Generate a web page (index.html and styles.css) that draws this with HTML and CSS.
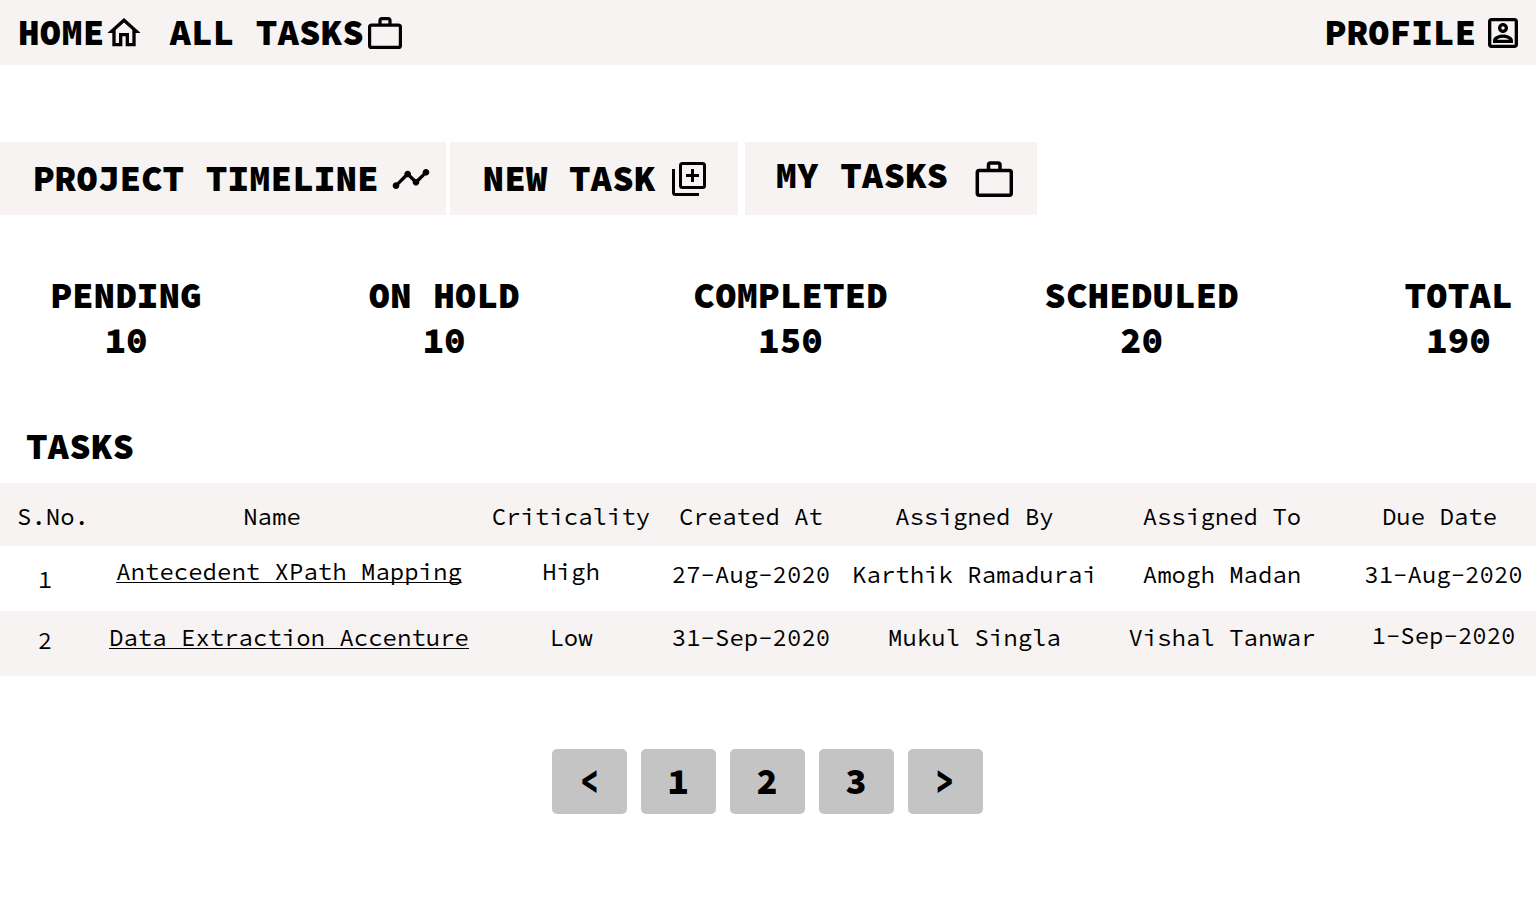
FILE: index.html
```html
<!DOCTYPE html>
<html lang="en">
<head>
<meta charset="utf-8">
<title>Tasks</title>
<link rel="stylesheet" href="styles.css">
</head>
<body>
<header class="topbar">
  <nav class="topnav">
    <a class="toplink" href="#">HOME<svg class="icon icon-home" viewBox="0 0 24 24"><path d="M12 5.69l5 4.5V18h-2v-6H9v6H7v-7.81l5-4.5M12 3L2 12h3v8h6v-6h2v6h6v-8h3L12 3z"/></svg></a>
    <a class="toplink" href="#">ALL TASKS<svg class="icon icon-case" viewBox="0 0 34 33"><rect x="1.600" y="9.100" width="30.800" height="22.300" rx="2"/><path d="M12 9V4.600Q12 2.600 14 2.600H20Q22 2.600 22 4.600V9"/></svg></a>
  </nav>
  <a class="toplink profile" href="#">PROFILE<svg class="icon icon-profile" viewBox="3 3 18 18"><path d="M19 5v14H5V5h14m0-2H5c-1.110 0-2 .9-2 2v14c0 1.100.89 2 2 2h14c1.100 0 2-.9 2-2V5c0-1.100-.9-2-2-2zm-7 9c-1.650 0-3-1.350-3-3s1.350-3 3-3 3 1.350 3 3-1.350 3-3 3zm0-4c-.55 0-1 .45-1 1s.45 1 1 1 1-.45 1-1-.45-1-1-1zm6 10H6v-1.530c0-2.500 3.970-3.580 6-3.580s6 1.080 6 3.580V18zm-9.690-2h7.380c-.69-.56-2.380-1.120-3.690-1.120s-3.010.56-3.690 1.120z"/></svg></a>
</header>
<main>
  <nav class="tabs">
    <a class="tab tab-timeline" href="#">PROJECT TIMELINE<svg class="icon icon-timeline" viewBox="1 6 22 12"><path d="M23 8c0 1.100-.9 2-2 2-.18 0-.35-.02-.51-.07l-3.560 3.550c.05.16.07.34.07.52 0 1.100-.9 2-2 2s-2-.9-2-2c0-.18.02-.36.07-.52l-2.550-2.550c-.16.05-.34.07-.52.07s-.36-.02-.52-.07l-4.550 4.560c.05.16.07.33.07.51 0 1.100-.9 2-2 2s-2-.9-2-2 .9-2 2-2c.18 0 .35.02.51.07l4.560-4.550C8.020 9.360 8 9.180 8 9c0-1.100.9-2 2-2s2 .9 2 2c0 .18-.02.36-.07.52l2.550 2.550c.16-.05.34-.07.52-.07s.36.02.52.07l3.550-3.560C19.020 8.350 19 8.180 19 8c0-1.100.9-2 2-2s2 .9 2 2z"/></svg></a>
    <a class="tab tab-new" href="#">NEW TASK<svg class="icon icon-add" viewBox="0 0 34 34"><rect x="8.500" y="1.500" width="24" height="24" rx="2"/><path d="M1.500 7V30.500Q1.500 32.500 3.500 32.500H27M20.500 7V20M14 13.500H27"/></svg></a>
    <a class="tab tab-mine" href="#"><span class="tab-raised">MY TASKS</span><svg class="icon icon-case-large" viewBox="0 0 38 36"><rect x="2.300" y="9.600" width="34" height="24.600" rx="2"/><path d="M13.500 9V4Q13.500 2 15.500 2H23Q25 2 25 4V9"/></svg></a>
  </nav>
  <dl class="stats">
    <div class="stat"><dt>PENDING</dt><dd>10</dd></div>
    <div class="stat"><dt>ON HOLD</dt><dd>10</dd></div>
    <div class="stat"><dt>COMPLETED</dt><dd>150</dd></div>
    <div class="stat"><dt>SCHEDULED</dt><dd>20</dd></div>
    <div class="stat"><dt>TOTAL</dt><dd>190</dd></div>
  </dl>
  <h1 class="heading">TASKS</h1>
  <table class="tasks">
    <colgroup><col class="c-no"><col class="c-name"><col class="c-crit"><col class="c-created"><col class="c-by"><col class="c-to"><col class="c-due"></colgroup>
    <thead>
      <tr><th class="h-no">S.No.</th><th class="h-name">Name</th><th>Criticality</th><th>Created At</th><th>Assigned By</th><th>Assigned To</th><th>Due Date</th></tr>
    </thead>
    <tbody>
      <tr><td class="low">1</td><td class="high"><a href="#">Antecedent XPath Mapping</a></td><td class="high">High</td><td>27-Aug-2020</td><td>Karthik Ramadurai</td><td>Amogh Madan</td><td class="due">31-Aug-2020</td></tr>
      <tr class="alt"><td class="low">2</td><td><a href="#">Data Extraction Accenture</a></td><td>Low</td><td>31-Sep-2020</td><td>Mukul Singla</td><td>Vishal Tanwar</td><td class="due high">1-Sep-2020</td></tr>
    </tbody>
  </table>
  <nav class="pages" aria-label="Pages">
    <button type="button">&lt;</button>
    <button type="button">1</button>
    <button type="button">2</button>
    <button type="button">3</button>
    <button type="button">&gt;</button>
  </nav>
</main>
</body>
</html>
```

FILE: styles.css
```css
* { box-sizing: border-box; }
body {
  margin: 0;
  background: #fff;
  color: #000;
  font-family: "Source Code Pro", "DejaVu Sans Mono", monospace;
  font-size: 36px;
  font-weight: 900;
  line-height: 45px;
}
a { color: inherit; }
.icon { flex: none; fill: currentColor; }
.icon-case, .icon-case-large, .icon-add { fill: none; stroke: currentColor; stroke-width: 3; }
.icon-case { stroke-width: 3.2; }
.icon-case-large { stroke-width: 3.5; }
.topbar {
  display: flex;
  align-items: center;
  justify-content: space-between;
  min-height: 65px;
  padding: 0 18px;
  background: #f7f3f2;
}
.topnav { display: flex; gap: 25px; }
.toplink, .tab { display: flex; align-items: center; text-decoration: none; white-space: nowrap; }
.icon-home { width: 40px; height: 40px; }
.icon-case { width: 34px; height: 33px; margin-left: 4px; }
.icon-profile { width: 30px; height: 30px; }
.profile { gap: 12px; }
.tabs { display: flex; margin-top: 77px; }
.tab { min-height: 73px; padding: 0 16px 0 33px; background: #f7f3f2; }
.tab-timeline { gap: 13px; margin-right: 4px; }
.tab-new { gap: 17px; padding: 0 32px 0 33px; margin-right: 7px; }
.tab-mine { gap: 27px; padding: 0 24px 0 30px; }
.tab-raised { padding-bottom: 6px; }
.icon-timeline { width: 38px; height: 20px; }
.icon-add { width: 34px; height: 34px; }
.icon-case-large { width: 38px; height: 36px; }
.stats {
  display: grid;
  grid-template-columns: 252fr 384fr 309fr 393fr 198fr;
  margin: 58px 0 0;
  text-align: center;
}
.stat dt, .stat dd { margin: 0; }
.stat:last-child { padding-left: 43px; }
.heading { margin: 61px 0 0; padding-left: 26px; font-size: inherit; font-weight: inherit; }
.tasks {
  width: 100%;
  margin-top: 14px;
  border-collapse: collapse;
  table-layout: fixed;
  font-size: 24px;
  font-weight: 400;
  line-height: 30px;
  text-align: center;
  white-space: nowrap;
}
.tasks a { text-decoration-thickness: 1px; text-decoration-skip-ink: none; text-underline-offset: 2px; }
.c-no { width: 5.86%; }
.c-name { width: 25.91%; }
.c-crit { width: 10.81%; }
.c-created { width: 12.63%; }
.c-by { width: 16.47%; }
.c-to { width: 15.76%; }
.c-due { width: 12.56%; }
.tasks th { height: 63px; padding: 4px 0 0; font-weight: 400; }
.tasks td { height: 65px; padding: 14px 0 0; vertical-align: top; }
.tasks thead, .tasks .alt { background: #f7f3f2; }
.tasks .h-no { padding-left: 16px; }
.tasks .h-name { padding-right: 34px; }
.tasks .high { padding-top: 11px; }
.tasks .low { padding-top: 19px; }
.tasks .due { padding-left: 8px; }
.tasks .alt td { padding-top: 12px; }
.tasks .alt .high { padding-top: 10px; }
.tasks .alt .low { padding-top: 15px; }
.pages { display: flex; justify-content: center; gap: 14px; margin-top: 73px; padding-right: 2px; }
.pages button {
  width: 75px;
  height: 65px;
  padding: 0;
  border: 0;
  border-radius: 5px;
  background: #c4c4c4;
  color: inherit;
  font: inherit;
}
```
